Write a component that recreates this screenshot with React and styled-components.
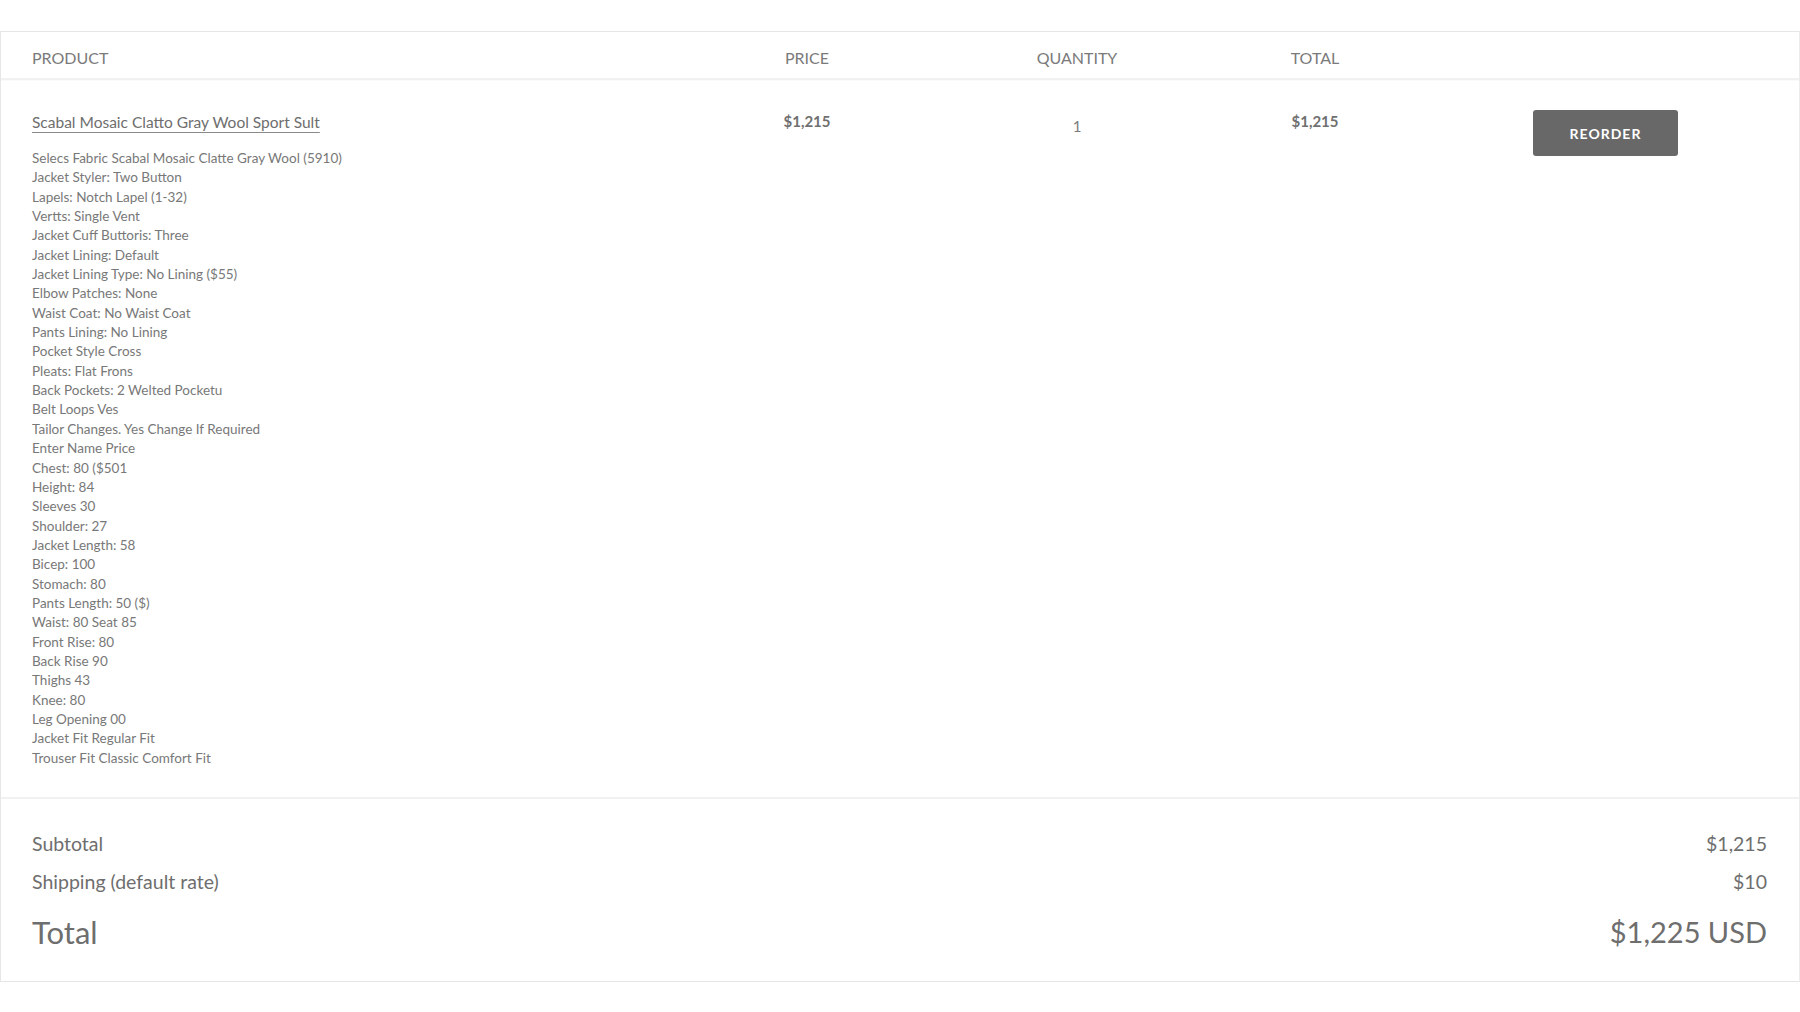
import styled, { createGlobalStyle } from "styled-components";

const GlobalStyle = createGlobalStyle`
  html, body {
    margin: 0;
    padding: 0;
    background: #ffffff;
    font-family: Lato, "Open Sans", "Liberation Sans", sans-serif;
    color: #6f6f6f;
  }
`;

const Page = styled.div`
  padding-top: 31px;
  padding-bottom: 30px;
`;

const Cart = styled.div`
  border: 1px solid #e6e6e6;
  border-right-color: #ececec;
  background: #ffffff;
`;

const COLUMNS = "668px 214px 326px 150px 1fr";

const HeaderRow = styled.div`
  display: grid;
  grid-template-columns: ${COLUMNS};
  align-items: center;
  height: 48px;
  padding: 4px 32px 0 31px;
  box-sizing: border-box;
  border-bottom: 2px solid #f1f1f1;
  box-shadow: 0 1px 1px rgba(0, 0, 0, 0.02);
`;

const HeaderCell = styled.div`
  font-size: 16px;
  color: #7a7a7a;
  text-transform: uppercase;
  text-align: ${(p) => (p.$align === "left" ? "left" : "center")};
`;

const ItemRow = styled.div`
  display: grid;
  grid-template-columns: ${COLUMNS};
  align-items: start;
  padding: 30px 32px 29px 31px;
  border-bottom: 2px solid #f1f1f1;
`;

const ProductCell = styled.div`
  display: flex;
  flex-direction: column;
  gap: 15px;
`;

const ProductTitle = styled.a`
  align-self: flex-start;
  font-size: 15.5px;
  line-height: 24px;
  color: #6e6e6e;
  text-decoration: underline;
  text-decoration-color: #8a8a8a;
  text-underline-offset: 4px;
  text-decoration-thickness: 1px;
  cursor: pointer;
`;

const DetailList = styled.ul`
  list-style: none;
  margin: 0;
  padding: 0;
  font-size: 13.5px;
  line-height: 19.35px;
  color: #787878;
`;

const MoneyCell = styled.div`
  text-align: center;
  font-size: 15px;
  font-weight: 700;
  line-height: 22px;
  color: #707070;
`;

const QuantityCell = styled.div`
  text-align: center;
  font-size: 15px;
  line-height: 22px;
  padding-top: 5px;
  color: #7a7a7a;
`;

const ActionCell = styled.div`
  padding-left: 143px;
`;

const ReorderButton = styled.button`
  width: 145px;
  height: 46px;
  border: none;
  border-radius: 3px;
  background: #686868;
  color: #ffffff;
  font-family: inherit;
  font-size: 14px;
  font-weight: 700;
  letter-spacing: 1px;
  text-transform: uppercase;
  cursor: pointer;
`;

const Summary = styled.div`
  padding: 26px 32px 24px 31px;
`;

const SummaryLine = styled.div`
  display: flex;
  justify-content: space-between;
  align-items: center;
  font-size: ${(p) => (p.$big ? "31px" : "19.5px")};
  line-height: ${(p) => (p.$big ? "50px" : "38px")};
  margin-top: ${(p) => (p.$big ? "6px" : "0")};
  color: #6e6e6e;
`;

const Amount = styled.span`
  font-size: ${(p) => (p.$big ? "29px" : "inherit")};
`;

const details = [
  "Selecs Fabric Scabal Mosaic Clatte Gray Wool (5910)",
  "Jacket Styler: Two Button",
  "Lapels: Notch Lapel (1-32)",
  "Vertts: Single Vent",
  "Jacket Cuff Buttoris: Three",
  "Jacket Lining: Default",
  "Jacket Lining Type: No Lining ($55)",
  "Elbow Patches: None",
  "Waist Coat: No Waist Coat",
  "Pants Lining: No Lining",
  "Pocket Style Cross",
  "Pleats: Flat Frons",
  "Back Pockets: 2 Welted Pocketu",
  "Belt Loops Ves",
  "Tailor Changes. Yes Change If Required",
  "Enter Name Price",
  "Chest: 80 ($501",
  "Height: 84",
  "Sleeves 30",
  "Shoulder: 27",
  "Jacket Length: 58",
  "Bicep: 100",
  "Stomach: 80",
  "Pants Length: 50 ($)",
  "Waist: 80 Seat 85",
  "Front Rise: 80",
  "Back Rise 90",
  "Thighs 43",
  "Knee: 80",
  "Leg Opening 00",
  "Jacket Fit Regular Fit",
  "Trouser Fit Classic Comfort Fit",
];

export default function App() {
  return (
    <Page>
      <GlobalStyle />
      <Cart>
        <HeaderRow>
          <HeaderCell $align="left">Product</HeaderCell>
          <HeaderCell>Price</HeaderCell>
          <HeaderCell>Quantity</HeaderCell>
          <HeaderCell>Total</HeaderCell>
          <div />
        </HeaderRow>

        <ItemRow>
          <ProductCell>
            <ProductTitle>Scabal Mosaic Clatto Gray Wool Sport Sult</ProductTitle>
            <DetailList>
              {details.map((d) => (
                <li key={d}>{d}</li>
              ))}
            </DetailList>
          </ProductCell>
          <MoneyCell>$1,215</MoneyCell>
          <QuantityCell>1</QuantityCell>
          <MoneyCell>$1,215</MoneyCell>
          <ActionCell>
            <ReorderButton>Reorder</ReorderButton>
          </ActionCell>
        </ItemRow>

        <Summary>
          <SummaryLine>
            <span>Subtotal</span>
            <Amount>$1,215</Amount>
          </SummaryLine>
          <SummaryLine>
            <span>Shipping (default rate)</span>
            <Amount>$10</Amount>
          </SummaryLine>
          <SummaryLine $big>
            <span>Total</span>
            <Amount $big>$1,225 USD</Amount>
          </SummaryLine>
        </Summary>
      </Cart>
    </Page>
  );
}
